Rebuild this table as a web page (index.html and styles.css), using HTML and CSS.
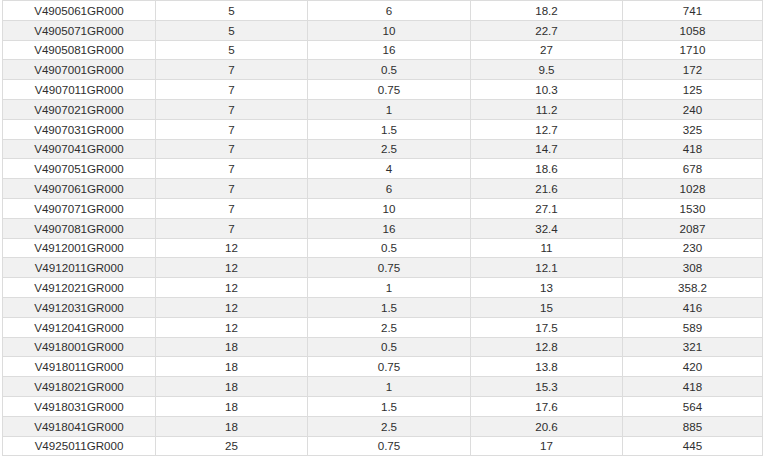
FILE: index.html
```html
<!DOCTYPE html>
<html>
<head>
<meta charset="utf-8">
<link rel="stylesheet" href="styles.css">
</head>
<body>
<table class="spec">
<colgroup><col class="c1"><col class="c2"><col class="c3"><col class="c4"><col class="c5"></colgroup>
<tbody>
<tr><td>V4905061GR000</td><td>5</td><td>6</td><td>18.2</td><td>741</td></tr>
<tr><td>V4905071GR000</td><td>5</td><td>10</td><td>22.7</td><td>1058</td></tr>
<tr><td>V4905081GR000</td><td>5</td><td>16</td><td>27</td><td>1710</td></tr>
<tr><td>V4907001GR000</td><td>7</td><td>0.5</td><td>9.5</td><td>172</td></tr>
<tr><td>V4907011GR000</td><td>7</td><td>0.75</td><td>10.3</td><td>125</td></tr>
<tr><td>V4907021GR000</td><td>7</td><td>1</td><td>11.2</td><td>240</td></tr>
<tr><td>V4907031GR000</td><td>7</td><td>1.5</td><td>12.7</td><td>325</td></tr>
<tr><td>V4907041GR000</td><td>7</td><td>2.5</td><td>14.7</td><td>418</td></tr>
<tr><td>V4907051GR000</td><td>7</td><td>4</td><td>18.6</td><td>678</td></tr>
<tr><td>V4907061GR000</td><td>7</td><td>6</td><td>21.6</td><td>1028</td></tr>
<tr><td>V4907071GR000</td><td>7</td><td>10</td><td>27.1</td><td>1530</td></tr>
<tr><td>V4907081GR000</td><td>7</td><td>16</td><td>32.4</td><td>2087</td></tr>
<tr><td>V4912001GR000</td><td>12</td><td>0.5</td><td>11</td><td>230</td></tr>
<tr><td>V4912011GR000</td><td>12</td><td>0.75</td><td>12.1</td><td>308</td></tr>
<tr><td>V4912021GR000</td><td>12</td><td>1</td><td>13</td><td>358.2</td></tr>
<tr><td>V4912031GR000</td><td>12</td><td>1.5</td><td>15</td><td>416</td></tr>
<tr><td>V4912041GR000</td><td>12</td><td>2.5</td><td>17.5</td><td>589</td></tr>
<tr><td>V4918001GR000</td><td>18</td><td>0.5</td><td>12.8</td><td>321</td></tr>
<tr><td>V4918011GR000</td><td>18</td><td>0.75</td><td>13.8</td><td>420</td></tr>
<tr><td>V4918021GR000</td><td>18</td><td>1</td><td>15.3</td><td>418</td></tr>
<tr><td>V4918031GR000</td><td>18</td><td>1.5</td><td>17.6</td><td>564</td></tr>
<tr><td>V4918041GR000</td><td>18</td><td>2.5</td><td>20.6</td><td>885</td></tr>
<tr><td>V4925011GR000</td><td>25</td><td>0.75</td><td>17</td><td>445</td></tr>
</tbody>
</table>
</body>
</html>
```
FILE: styles.css
```css
html, body {
  margin: 0;
  padding: 0;
  background: #fff;
}
.spec {
  margin-left: 2px;
  border-collapse: collapse;
  table-layout: fixed;
  width: 760px;
  font-family: "Liberation Sans", Arial, sans-serif;
  font-size: 11.6px;
  color: #2e2e2e;
}
.c1 { width: 153px; }
.c2 { width: 152px; }
.c3 { width: 163px; }
.c4 { width: 152px; }
.c5 { width: 140px; }
.spec td {
  border: 1px solid #dcdcdc;
  height: 18.8px;
  padding: 0;
  text-align: center;
  vertical-align: middle;
  line-height: 13px;
}
.spec tr:nth-child(even) td {
  background: #f1f1f1;
}
```
